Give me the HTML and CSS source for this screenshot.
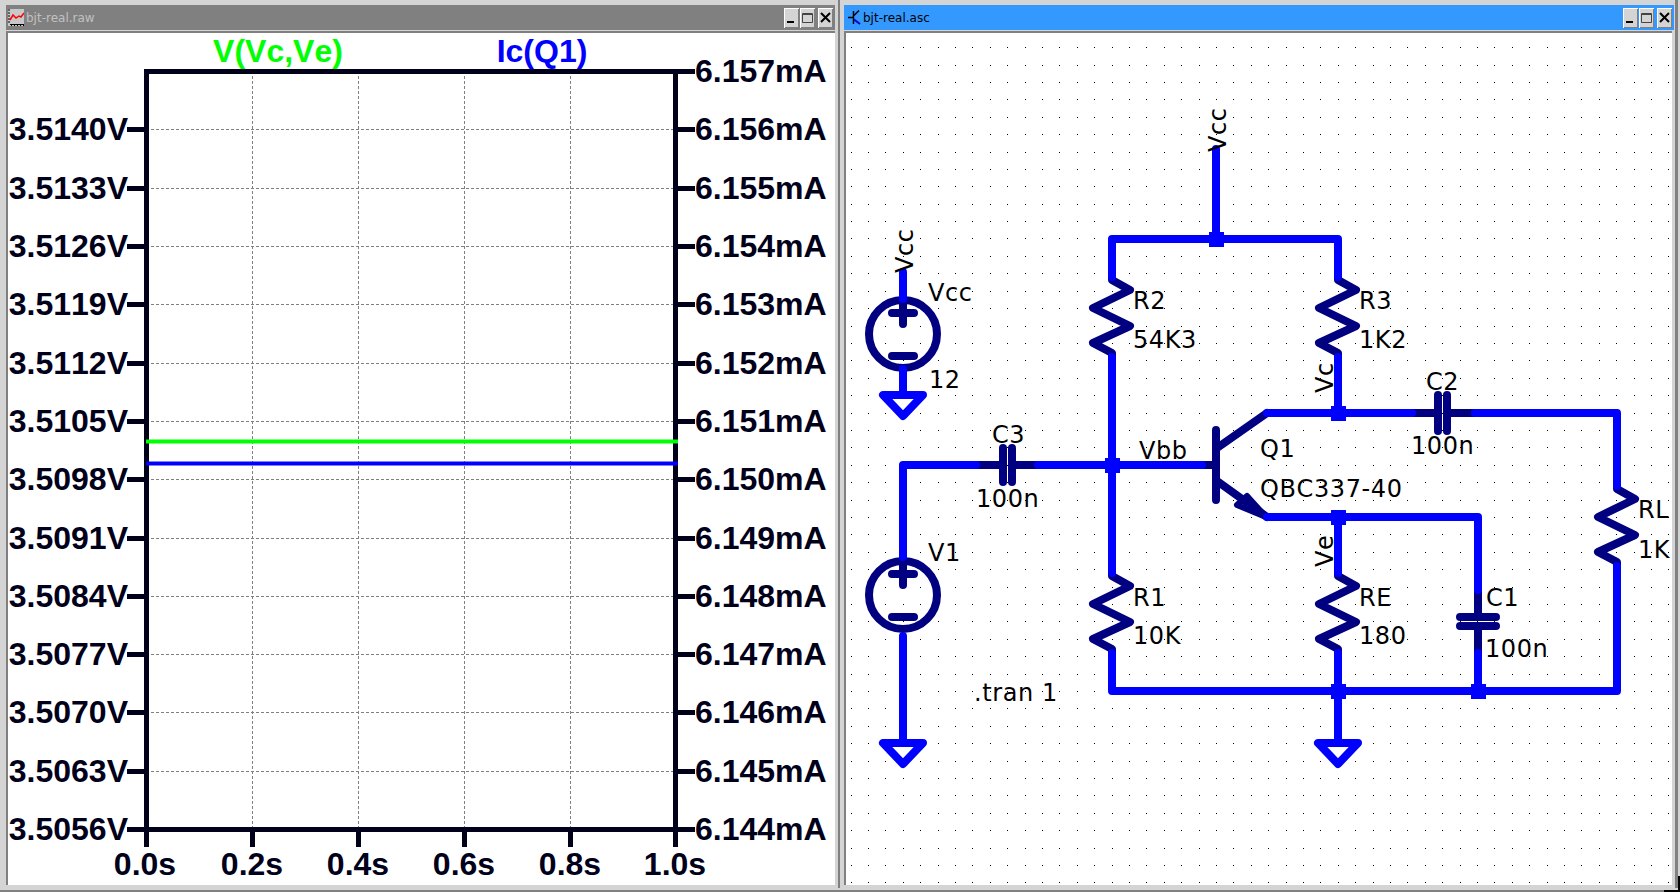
FILE: index.html
```html
<!DOCTYPE html>
<html lang="en">
<head>
    <meta charset="UTF-8">
    <title>bjt-real</title>
    <link rel="stylesheet" href="styles.css">
</head>
<body>
<svg class="defs" width="0" height="0">
    <symbol id="i-min" viewBox="0 0 11 12"><rect x="1" y="9" width="7" height="2" fill="#000"/></symbol>
    <symbol id="i-max" viewBox="0 0 11 12"><path d="M.5 1.5h10v9H.5zM.5 2.5h10" fill="none" stroke="#444"/></symbol>
    <symbol id="i-close" viewBox="0 0 11 12"><path d="M1 1l9 9M10 1l-9 9" fill="none" stroke="#000" stroke-width="2"/></symbol>
</svg>
<div class="desk">
    <div class="win win-plot">
        <div class="title title-off">
            <svg class="app-icon" width="16" height="17" viewBox="0 0 16 17">
                <rect width="16" height="17" fill="#c8c8c8"/>
                <path d="M0 1h2M0 4h2M0 7h2M0 10h2M0 13h2M2 15.500h14M3 16.500h1M6 16.500h1M9 16.500h1M12 16.500h1M15 16.500h1" stroke="#000"/>
                <path d="M2 11L5 6L8 9L11 7L13 8L16 4" fill="none" stroke="#f00" stroke-width="1.500"/>
            </svg>
            <span class="title-text">bjt-real.raw</span>
            <div class="btns">
                <div class="btn"><svg width="11" height="12"><use href="#i-min"/></svg></div>
                <div class="btn"><svg width="11" height="12"><use href="#i-max"/></svg></div>
                <div class="btn btn-close"><svg width="11" height="12"><use href="#i-close"/></svg></div>
            </div>
        </div>
        <div class="client">
            <svg class="plot" width="827" height="852" viewBox="8 33 827 852">
                <path class="grid" d="M146 129.500H675M146 188.500H675M146 246.500H675M146 304.500H675M146 363.500H675M146 421.500H675M146 479.500H675M146 538.500H675M146 596.500H675M146 654.500H675M146 712.500H675M146 771.500H675M252.500 71V829M358.500 71V829M464.500 71V829M570.500 71V829"/>
                <path class="axis" d="M146.500 71.500H675.500M146.500 69V847M675.500 69V847M127 829.500H695M252.500 829V847M358.500 829V847M464.500 829V847M570.500 829V847M127 129.500H146M127 188.500H146M127 246.500H146M127 304.500H146M127 363.500H146M127 421.500H146M127 479.500H146M127 538.500H146M127 596.500H146M127 654.500H146M127 712.500H146M127 771.500H146M675 71.500H695M675 129.500H695M675 188.500H695M675 246.500H695M675 304.500H695M675 363.500H695M675 421.500H695M675 479.500H695M675 538.500H695M675 596.500H695M675 654.500H695M675 712.500H695M675 771.500H695"/>
                <path class="trace trace-v" d="M146 441.500H678"/>
                <path class="trace trace-i" d="M146 463.500H678"/>
                <text class="ptxt ptxt-v" x="278" y="62" text-anchor="middle">V(Vc,Ve)</text>
                <text class="ptxt ptxt-i" x="542" y="62" text-anchor="middle">Ic(Q1)</text>
                <g class="ptxt" text-anchor="end">
                    <text x="128" y="140">3.5140V</text>
                    <text x="128" y="199">3.5133V</text>
                    <text x="128" y="257">3.5126V</text>
                    <text x="128" y="315">3.5119V</text>
                    <text x="128" y="374">3.5112V</text>
                    <text x="128" y="432">3.5105V</text>
                    <text x="128" y="490">3.5098V</text>
                    <text x="128" y="549">3.5091V</text>
                    <text x="128" y="607">3.5084V</text>
                    <text x="128" y="665">3.5077V</text>
                    <text x="128" y="723">3.5070V</text>
                    <text x="128" y="782">3.5063V</text>
                    <text x="128" y="840">3.5056V</text>
                </g>
                <g class="ptxt">
                    <text x="695" y="82">6.157mA</text>
                    <text x="695" y="140">6.156mA</text>
                    <text x="695" y="199">6.155mA</text>
                    <text x="695" y="257">6.154mA</text>
                    <text x="695" y="315">6.153mA</text>
                    <text x="695" y="374">6.152mA</text>
                    <text x="695" y="432">6.151mA</text>
                    <text x="695" y="490">6.150mA</text>
                    <text x="695" y="549">6.149mA</text>
                    <text x="695" y="607">6.148mA</text>
                    <text x="695" y="665">6.147mA</text>
                    <text x="695" y="723">6.146mA</text>
                    <text x="695" y="782">6.145mA</text>
                    <text x="695" y="840">6.144mA</text>
                </g>
                <g class="ptxt" text-anchor="middle">
                    <text x="145" y="875">0.0s</text>
                    <text x="252" y="875">0.2s</text>
                    <text x="358" y="875">0.4s</text>
                    <text x="464" y="875">0.6s</text>
                    <text x="570" y="875">0.8s</text>
                    <text x="675" y="875">1.0s</text>
                </g>
            </svg>
        </div>
    </div>
    <div class="win win-sch">
        <div class="title title-on">
            <svg class="app-icon" width="14" height="15" viewBox="0 0 14 15">
                <path d="M0 7.500H5M5.500 1V14" fill="none" stroke="#000" stroke-width="1.500"/>
                <path d="M6 5.500L11 .5" fill="none" stroke="#000" stroke-width="1.500"/>
                <path d="M6 9.500L12 14" fill="none" stroke="#00c" stroke-width="2"/>
            </svg>
            <span class="title-text">bjt-real.asc</span>
            <div class="btns">
                <div class="btn"><svg width="11" height="12"><use href="#i-min"/></svg></div>
                <div class="btn"><svg width="11" height="12"><use href="#i-max"/></svg></div>
                <div class="btn btn-close"><svg width="11" height="12"><use href="#i-close"/></svg></div>
            </div>
        </div>
        <div class="client">
            <svg class="sch" width="826" height="852" viewBox="846 33 826 852">
                <defs>
                    <path id="res" d="M0 0V3L18 13L-19 31L18 49L-19 66L0 76V80"/>
                    <path id="gnd" d="M-20 0H20L0 21Z"/>
                    <g id="src">
                        <circle cx="0" cy="0" r="34"/>
                        <path d="M-11 -21H11M0 -30V-10M-11 22H11"/>
                    </g>
                </defs>
                <path id="dots" class="dots"/>

                <!-- parts -->
                <g class="part">
                    <use href="#res" x="1112" y="277"/>
                    <use href="#res" x="1338" y="277"/>
                    <use href="#res" x="1112" y="573"/>
                    <use href="#res" x="1338" y="573"/>
                    <use href="#res" x="1617" y="486"/>
                    <use href="#src" x="903" y="334"/>
                    <use href="#src" x="903" y="595"/>
                    <!-- caps -->
                    <path d="M976 465H1003M1012 465H1038M1003 448V482M1012 448V482"/>
                    <path d="M1412 413H1438M1447 413H1475M1438 395V431M1447 395V431"/>
                    <path d="M1478 590V617M1478 626V653M1460 617H1496M1460 626H1496"/>
                    <!-- q1 -->
                    <path d="M1202 465H1216M1216 430V500M1217 448L1267 413M1217 481L1267 517"/>
                    <path class="arrow" d="M1237 505L1266 517L1247 496Z"/>
                </g>

                <!-- wires -->
                <g class="wire">
                    <path d="M1216 149V239M1112 277V239H1338V277M1338 357V413M1112 357V573M1112 653V691H1617V566M1617 486V413H1475M1267 413H1412"/>
                    <path d="M903 742V636M903 557V465H976M1038 465H1202"/>
                    <path d="M1267 517H1478V590M1338 517V573M1338 653V742M1478 653V691"/>
                    <path d="M903 272V299M903 369V395"/>
                    <use href="#gnd" x="903" y="395"/>
                    <use href="#gnd" x="903" y="743"/>
                    <use href="#gnd" x="1338" y="743"/>
                </g>
                <g class="junction">
                    <rect x="1209" y="232" width="15" height="15"/>
                    <rect x="1105" y="458" width="15" height="15"/>
                    <rect x="1331" y="406" width="15" height="15"/>
                    <rect x="1331" y="510" width="15" height="15"/>
                    <rect x="1331" y="684" width="15" height="15"/>
                    <rect x="1471" y="684" width="15" height="15"/>
                </g>

                <!-- labels -->
                <g class="lbl">
                    <text transform="translate(913 273) rotate(-90)">Vcc</text>
                    <text transform="translate(1226 152) rotate(-90)">Vcc</text>
                    <text transform="translate(1333 393) rotate(-90)">Vc</text>
                    <text transform="translate(1333 567) rotate(-90)">Ve</text>
                    <text x="928" y="301">Vcc</text>
                    <text x="929" y="388">12</text>
                    <text x="1133" y="309">R2</text>
                    <text x="1133" y="348">54K3</text>
                    <text x="1359" y="309">R3</text>
                    <text x="1359" y="348">1K2</text>
                    <text x="1426" y="390">C2</text>
                    <text x="1411" y="454">100n</text>
                    <text x="992" y="443">C3</text>
                    <text x="976" y="507">100n</text>
                    <text x="1139" y="459">Vbb</text>
                    <text x="1260" y="457">Q1</text>
                    <text x="1260" y="497">QBC337-40</text>
                    <text x="928" y="561">V1</text>
                    <text x="1133" y="606">R1</text>
                    <text x="1133" y="644">10K</text>
                    <text x="1359" y="606">RE</text>
                    <text x="1359" y="644">180</text>
                    <text x="1486" y="606">C1</text>
                    <text x="1485" y="657">100n</text>
                    <text x="1638" y="518">RL</text>
                    <text x="1638" y="558">1K</text>
                    <text x="974" y="701">.tran 1</text>
                </g>
            </svg>
        </div>
    </div>
</div>
<script src="script.js"></script>
</body>
</html>
```

FILE: styles.css
```css
*{box-sizing:border-box;}
html,body{margin:0;padding:0;}
body{width:1680px;height:892px;overflow:hidden;background:#d4d4d4;font-family:"DejaVu Sans",sans-serif;}
.defs{display:block;height:0;}
.desk{display:flex;height:892px;padding-bottom:2px;border-bottom:2px solid #808080;position:relative;}
/* black corner of the outer frame */
.desk::before{content:"";position:absolute;right:0;bottom:-2px;width:16px;height:2px;background:#000;}
.desk::after{content:"";position:absolute;right:0;bottom:-2px;width:2px;height:16px;background:#000;}

.win{display:flex;flex-direction:column;padding:5px 3px 3px 6px;background:#d4d4d4;}
.win-plot{width:840px;border-right:2px solid #808080;padding-right:3px;}
.win-sch{width:840px;padding:5px 6px 3px 4px;position:relative;}
.win-sch::after{content:"";position:absolute;top:0;right:2px;bottom:0;width:3px;background:#808080;}

/* title bar */
.title{display:flex;align-items:center;height:25px;flex:none;margin-bottom:1px;}
.title-off{background:#808080;color:#c0c0c0;padding-left:2px;}
.title-on{background:#3399ff;color:#000;padding-left:4px;width:830px;}
.app-icon{flex:none;}
.title-text{font-size:12px;margin-left:2px;}
.title-on .title-text{margin-left:1px;}
.btns{display:flex;margin-left:auto;padding-right:2px;}
.btn{width:15px;height:20px;margin-left:1px;display:flex;align-items:center;justify-content:center;background:#d4d4d4;box-shadow:inset 1px 1px 0 #fff,inset -1px -1px 0 #808080;}
.btn-close{margin-left:3px;}

.client{flex:1;min-height:0;border-top:2px solid #808080;border-left:2px solid #808080;background:#fff;overflow:hidden;}
.win-sch .client{width:828px;}
.client svg{display:block;}

/* plot */
.plot .grid{fill:none;stroke:#808080;stroke-width:1;stroke-dasharray:3 2;}
.trace{fill:none;stroke-width:4;}
.trace-v{stroke:#00ff00;}
.trace-i{stroke:#0000ff;}
.axis{fill:none;stroke:#00001a;stroke-width:5;}
.ptxt{font:bold 32px "Liberation Sans",Arial,sans-serif;font-kerning:none;fill:#00001a;}
.ptxt-v{fill:#00ff00;}
.ptxt-i{fill:#0000ff;}

/* schematic */
.dots{fill:#000;shape-rendering:crispEdges;}
.part,.wire{fill:none;stroke-width:8;stroke-linecap:round;stroke-linejoin:round;}
.part{stroke:#000080;}
.wire{stroke:#0000ff;}
.arrow{stroke-width:6;}
.junction{fill:#0000ff;}
.lbl{font:24px "DejaVu Sans",sans-serif;font-kerning:none;fill:#000;letter-spacing:.6px;}
```

FILE: script.js
```js
// grid dots of the schematic, 1px each so they stay crisp
var d = '';
for(var i = 0;i < 48;i++){
    for(var j = 0;j < 49;j++){
        var x = Math.floor(851 + i * 17.4);
        var y = Math.floor(47.6 + j * 17.4);
        d += 'M' + x + ' ' + y + 'h1v1h-1z';
    }
}
document.getElementById('dots').setAttribute('d',d);
```
